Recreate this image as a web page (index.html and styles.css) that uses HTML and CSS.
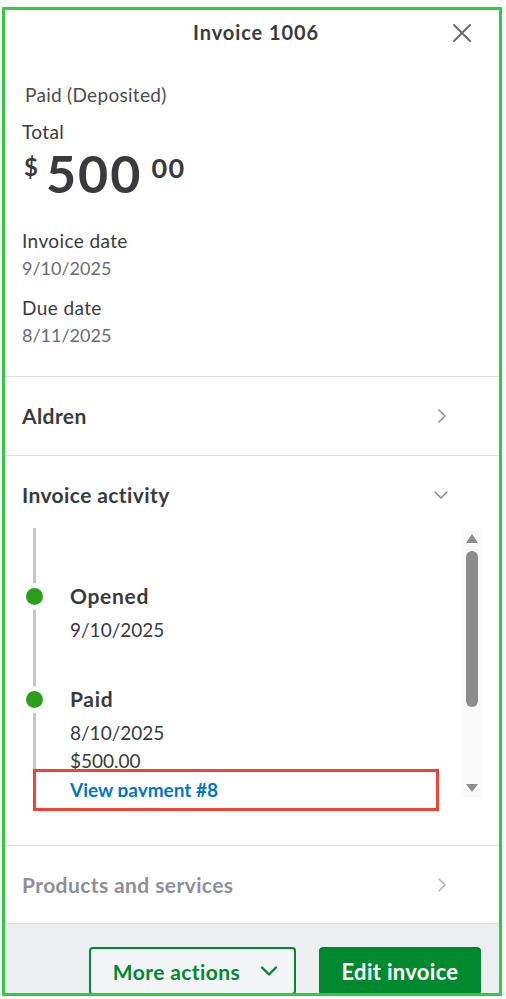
FILE: index.html
```html
<!DOCTYPE html>
<html lang="en">
<head>
<meta charset="utf-8">
<title>Invoice 1006</title>
<link rel="stylesheet" href="styles.css">
</head>
<body>
<div class="frame">
  <header class="head">
    <h1 class="title">Invoice 1006</h1>
    <button class="close" aria-label="Close">
      <svg width="18" height="18" viewBox="0 0 18 18"><path d="M1 1 L17 17 M17 1 L1 17" stroke="#6b6c72" stroke-width="2" fill="none" stroke-linecap="round"/></svg>
    </button>
  </header>

  <section class="summary">
    <div class="status">Paid (Deposited)</div>
    <div class="label total-label">Total</div>
    <div class="amount"><span class="cur">$</span><span class="whole">500</span><span class="cents">00</span></div>
    <div class="label field-first">Invoice date</div>
    <div class="value">9/10/2025</div>
    <div class="label field">Due date</div>
    <div class="value">8/11/2025</div>
  </section>

  <div class="row">
    <span class="row-title">Aldren</span>
    <svg class="chev" width="10" height="16" viewBox="0 0 10 16"><path d="M2 2 L8 8 L2 14" stroke="#8d9096" stroke-width="1.6" fill="none" stroke-linecap="round" stroke-linejoin="round"/></svg>
  </div>

  <section class="activity">
    <div class="activity-head">
      <span class="row-title">Invoice activity</span>
      <svg class="chev-down" width="16" height="10" viewBox="0 0 16 10"><path d="M2 2 L8 8 L14 2" stroke="#8d9096" stroke-width="1.6" fill="none" stroke-linecap="round" stroke-linejoin="round"/></svg>
    </div>
    <div class="scroll">
      <div class="timeline">
        <div class="item first">
          <span class="dot"></span>
          <div class="item-body">
            <div class="item-title">Opened</div>
            <div class="item-line date">9/10/2025</div>
          </div>
        </div>
        <div class="item second">
          <span class="dot"></span>
          <div class="item-body">
            <div class="item-title">Paid</div>
            <div class="item-line date">8/10/2025</div>
            <div class="item-line amt">$500.00</div>
            <a class="item-link" href="#">View payment #8</a>
          </div>
        </div>
      </div>
      <div class="scrollbar">
        <span class="arrow-up"></span>
        <span class="thumb"></span>
        <span class="spacer"></span>
        <span class="arrow-down"></span>
      </div>
    </div>
  </section>

  <div class="row row-products">
    <span class="row-title muted">Products and services</span>
    <svg class="chev" width="10" height="16" viewBox="0 0 10 16"><path d="M2 2 L8 8 L2 14" stroke="#b3b5b9" stroke-width="1.6" fill="none" stroke-linecap="round" stroke-linejoin="round"/></svg>
  </div>

  <footer class="foot">
    <button class="btn btn-outline">More actions
      <svg width="18" height="12" viewBox="0 0 18 12"><path d="M2 2.5 L9 9.5 L16 2.5" stroke="#00892e" stroke-width="2.4" fill="none" stroke-linecap="round" stroke-linejoin="round"/></svg>
    </button>
    <button class="btn btn-primary">Edit invoice</button>
  </footer>

  <div class="highlight"></div>
</div>
</body>
</html>
```

FILE: styles.css
```css
* { box-sizing: border-box; }

html, body {
  margin: 0;
  padding: 0;
  background: #ffffff;
}

body {
  font-family: "Lato", "Liberation Sans", sans-serif;
  color: #393a3d;
}

.frame {
  position: relative;
  margin: 7px 0 0 2px;
  width: 500px;
  height: 989px;
  border: 3px solid #2ecc40;
  overflow: hidden;
  background: #ffffff;
  display: flex;
  flex-direction: column;
}

/* header */
.head {
  height: 44px;
  display: flex;
  align-items: center;
  justify-content: center;
  position: relative;
  flex: none;
}

.title {
  margin: 0;
  font-size: 20px;
  font-weight: 700;
  letter-spacing: 0.9px;
  line-height: 44px;
  color: #393a3d;
  padding-left: 8px;
}

.close {
  position: absolute;
  right: 28px;
  top: 14px;
  width: 18px;
  height: 18px;
  padding: 0;
  border: 0;
  background: none;
  display: flex;
}

/* summary */
.summary {
  padding: 0 17px 29px;
  border-bottom: 1px solid #dcdde0;
  flex: none;
}

.status {
  margin-top: 29px;
  padding-left: 3px;
  font-size: 19px;
  letter-spacing: 0.3px;
  line-height: 24px;
  color: #4a4b4f;
}

.label {
  font-size: 19px;
  letter-spacing: 0.4px;
  line-height: 24px;
  color: #393a3d;
}

.total-label { margin-top: 13px; }
.field-first { margin-top: 30px; }
.field { margin-top: 16px; }

.value {
  margin-top: 3px;
  font-size: 18px;
  line-height: 24px;
  color: #6b6c72;
}

.amount {
  margin-top: 3px;
  height: 52px;
  display: flex;
  align-items: flex-start;
  font-weight: 700;
  color: #393a3d;
}

.cur {
  font-size: 24px;
  line-height: 24px;
  margin-top: 8px;
  margin-left: 2px;
}

.whole {
  font-size: 52px;
  line-height: 52px;
  margin-left: 8px;
  letter-spacing: 2px;
}

.cents {
  font-size: 27px;
  line-height: 26px;
  margin-top: 8px;
  margin-left: 9px;
  letter-spacing: 1.5px;
}

/* rows */
.row {
  height: 79px;
  padding: 0 52px 0 17px;
  display: flex;
  align-items: center;
  justify-content: space-between;
  border-bottom: 1px solid #dcdde0;
  flex: none;
}

.row-products { height: 78px; }

.row-title {
  font-size: 21px;
  font-weight: 700;
  letter-spacing: 0.4px;
  line-height: 24px;
  color: #393a3d;
}

.row-title.muted { color: #8d9096; }

/* activity */
.activity {
  border-bottom: 1px solid #dcdde0;
  padding-bottom: 48px;
  flex: none;
}

.activity-head {
  padding: 27px 50px 0 17px;
  display: flex;
  align-items: center;
  justify-content: space-between;
}

.scroll {
  margin: 21px 18px 0 17px;
  height: 269px;
  display: flex;
}

.timeline {
  flex: 1;
  overflow: hidden;
  background: linear-gradient(#c4c7cc, #c4c7cc) no-repeat 11px 0 / 3px 100%;
}

.item {
  display: grid;
  grid-template-columns: 48px 1fr;
  align-items: start;
}

.item.first { padding-top: 56px; }
.item.second { margin-top: 45px; }

.dot {
  width: 17px;
  height: 17px;
  margin: 4px 0 0 4px;
  border-radius: 50%;
  background: #2ca01c;
  box-shadow: 0 0 0 5px #ffffff;
}

.item-title {
  font-size: 21px;
  font-weight: 700;
  letter-spacing: 0.7px;
  line-height: 24px;
  color: #393a3d;
}

.item-line {
  font-size: 19px;
  line-height: 24px;
  color: #393a3d;
}

.item-line.date { margin-top: 10px; }
.item-line.amt { margin-top: 4px; }

.item-link {
  display: block;
  margin-top: 5px;
  font-size: 19px;
  font-weight: 700;
  line-height: 24px;
  color: #0077c5;
  text-decoration: none;
}

.scrollbar {
  width: 19px;
  flex: none;
  background: #f9f9f9;
  display: flex;
  flex-direction: column;
  align-items: center;
  padding: 6px 0 5px;
}

.arrow-up {
  width: 0;
  height: 0;
  border-left: 6px solid transparent;
  border-right: 6px solid transparent;
  border-bottom: 9px solid #8c8c8c;
}

.arrow-down {
  width: 0;
  height: 0;
  border-left: 6px solid transparent;
  border-right: 6px solid transparent;
  border-top: 8px solid #8c8c8c;
}

.thumb {
  margin-top: 8px;
  width: 12px;
  height: 156px;
  border-radius: 6px;
  background: #8c8c8c;
}

.spacer { flex: 1; }

/* footer */
.foot {
  flex: 1;
  background: #eceef1;
  display: flex;
  justify-content: flex-end;
  align-items: flex-start;
  gap: 23px;
  padding: 23px 18px 0;
}

.btn {
  height: 48px;
  border-radius: 4px;
  font-family: "Lato", "Liberation Sans", sans-serif;
  font-weight: 700;
  display: flex;
  align-items: center;
  justify-content: center;
  flex: none;
}

.btn-outline {
  width: 207px;
  border: 2px solid #00892e;
  background: #f3f4f6;
  color: #00892e;
  font-size: 21px;
  letter-spacing: 0.4px;
  gap: 20px;
  padding-left: 12px;
}

.btn-primary {
  width: 162px;
  border: 0;
  background: #00892e;
  color: #ffffff;
  font-size: 22px;
  letter-spacing: 0.3px;
}

/* annotation overlay */
.highlight {
  position: absolute;
  left: 28px;
  top: 759px;
  width: 406px;
  height: 42px;
  border: 3px solid #f44336;
  pointer-events: none;
}
```
